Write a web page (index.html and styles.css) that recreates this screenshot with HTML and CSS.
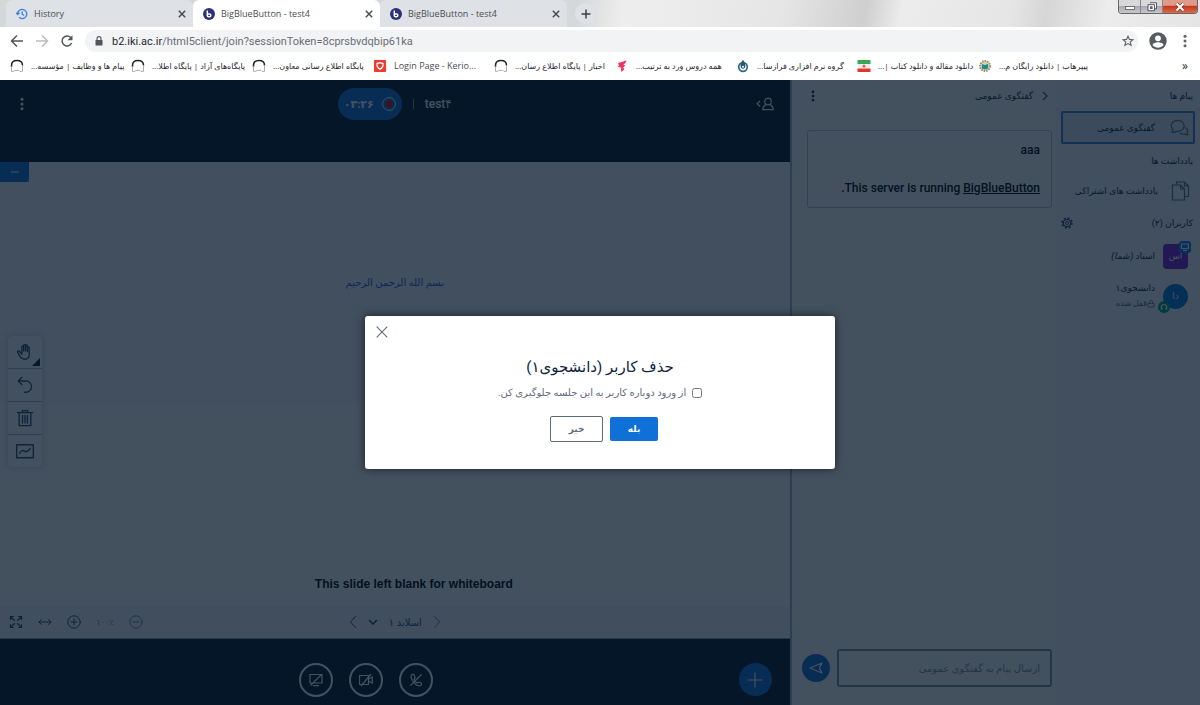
FILE: index.html
```html
<!DOCTYPE html>
<html lang="fa">
<head>
<meta charset="utf-8">
<title>BigBlueButton - test4</title>
<link rel="stylesheet" href="styles.css">
</head>
<body>
<svg class="defs" aria-hidden="true">
  <symbol id="bbb" viewBox="0 0 12 12"><circle cx="6" cy="6" r="6" fill="#283274"/><path d="M4.3 2.4v5.2c0 .8.5 1.2 1.2 1.2h1c.8 0 1.3-.5 1.3-1.3s-.5-1.4-1.3-1.4H5" fill="none" stroke="#fff" stroke-width="1.5"/></symbol>
  <symbol id="x" viewBox="0 0 10 10"><path d="M1.8 1.8l6.4 6.4M8.2 1.8L1.8 8.2" fill="none" stroke="currentColor" stroke-width="1.5"/></symbol>
  <symbol id="arch" viewBox="0 0 14 14"><path d="M1.5 8V6.500C1.500 3 4 1.600 7 1.600S12.500 3 12.500 6.500" fill="none" stroke="#222" stroke-width="1.500"/><path d="M12.500 6v6.400h-2.600l-1-1H5l-1.300 1H1.500V7" fill="none" stroke="#999" stroke-width=".8"/></symbol>
  <symbol id="dots" viewBox="0 0 4 14"><circle cx="2" cy="2.2" r="1.5"/><circle cx="2" cy="7" r="1.5"/><circle cx="2" cy="11.8" r="1.5"/></symbol>
</svg>

<header class="browser">
  <div class="tabs">
    <div class="tab">
      <svg class="fav" viewBox="0 0 12 12" fill="none" stroke="#3b82e6" stroke-width="1.3"><path d="M1.6 6A4.6 4.6 0 1 1 3 9.3M0 4.6l1.7 2 1.9-1.8M6.2 3.2v3l2 1.2"/></svg>
      <span class="tab-name">History</span><button class="tab-x" aria-label="Close tab"><svg><use href="#x"/></svg></button>
    </div>
    <div class="tab tab-on">
      <svg class="fav"><use href="#bbb"/></svg>
      <span class="tab-name">BigBlueButton - test4</span><button class="tab-x" aria-label="Close tab"><svg><use href="#x"/></svg></button>
    </div>
    <div class="tab">
      <svg class="fav"><use href="#bbb"/></svg>
      <span class="tab-name">BigBlueButton - test4</span><button class="tab-x" aria-label="Close tab"><svg><use href="#x"/></svg></button>
    </div>
    <button class="tab-new" aria-label="New tab"><svg viewBox="0 0 10 10"><path d="M5 .5v9M.5 5h9" stroke="#3c4043" stroke-width="1.5"/></svg></button>
    <div class="win">
      <button aria-label="Minimize"><svg viewBox="0 0 12 10"><rect x="1.5" y="4.5" width="9" height="3" fill="#fff" stroke="#555" stroke-width=".8"/></svg></button>
      <button aria-label="Restore"><svg viewBox="0 0 12 10"><path d="M4 .8h6.5v6H8.500M2 2.700h6.500v6H2z" fill="#fff" stroke="#445" stroke-width=".9"/><rect x="4.200" y="4.700" width="2" height="2" fill="#667" stroke="#445" stroke-width=".6"/></svg></button>
      <button class="win-x" aria-label="Close"><svg viewBox="0 0 12 10"><path d="M2.500 1.500l7 7M9.500 1.500l-7 7" stroke="#6b3a35" stroke-width="3.200"/><path d="M2.500 1.500l7 7M9.500 1.500l-7 7" stroke="#fff" stroke-width="2"/></svg></button>
    </div>
  </div>

  <div class="nav">
    <button aria-label="Back"><svg viewBox="0 0 14 14" fill="none" stroke="#50555a" stroke-width="1.500"><path d="M13 7H2M7 1.500L1.500 7 7 12.500"/></svg></button>
    <button aria-label="Forward"><svg viewBox="0 0 14 14" fill="none" stroke="#b9bcc0" stroke-width="1.500"><path d="M1 7h11M7 1.500L12.500 7 7 12.500"/></svg></button>
    <button aria-label="Reload"><svg viewBox="0 0 14 14"><path d="M11.600 9A5 5 0 1 1 10.800 3.600" fill="none" stroke="#50555a" stroke-width="1.500"/><path d="M12.500 1.300v5H7.500z" fill="#50555a"/></svg></button>
    <div class="url">
      <svg class="lock" viewBox="0 0 8 10"><rect x=".5" y="4" width="7" height="5.500" rx=".6" fill="#50555a"/><path d="M2 4V2.600a2 2 0 0 1 4 0V4" fill="none" stroke="#50555a" stroke-width="1.100"/></svg>
      <span class="addr"><b>b2.iki.ac.ir</b>/html5client/join?sessionToken=8cprsbvdqbip61ka</span>
      <svg class="star" viewBox="0 0 12 12"><path d="M6 1.200l1.400 3.200 3.500.3-2.700 2.300.9 3.400L6 8.600l-3.100 1.800.9-3.400L1.100 4.700l3.500-.3z" fill="none" stroke="#5f6368" stroke-width="1.100"/></svg>
    </div>
    <button class="profile" aria-label="Profile"><svg viewBox="0 0 18 18"><circle cx="9" cy="9" r="8.700" fill="#565b62"/><circle cx="9" cy="6.300" r="2.900" fill="#fff"/><path d="M3.600 13.200c0-2 3.600-2.900 5.400-2.900s5.400.9 5.400 2.900C13 14.800 11 15.700 9 15.700s-4-.9-5.400-2.500z" fill="#fff"/></svg></button>
    <button class="kebab" aria-label="Menu"><svg fill="#5f6368"><use href="#dots"/></svg></button>
  </div>

  <nav class="marks">
    <a href="#"><svg><use href="#arch"/></svg><span dir="rtl">پیام ها و وظایف | مؤسسه...</span></a>
    <a href="#"><svg><use href="#arch"/></svg><span dir="rtl">پایگاه‌های آزاد | پایگاه اطلا...</span></a>
    <a href="#"><svg><use href="#arch"/></svg><span dir="rtl">پایگاه اطلاع رسانی معاون...</span></a>
    <a href="#"><svg viewBox="0 0 14 14"><rect x="1" y="1" width="12" height="12" rx="1" fill="#ee3b2b"/><path d="M4 4.500l3-.8 3 .8c.3 3-1 4.700-3 5.800-2-1.100-3.300-2.800-3-5.800z" fill="none" stroke="#fff" stroke-width="1.300"/></svg><span class="lat">Login Page - Kerio...</span></a>
    <a href="#"><svg><use href="#arch"/></svg><span dir="rtl">اخبار | پایگاه اطلاع رسان...</span></a>
    <a href="#"><svg viewBox="0 0 14 14"><path d="M11.500 1.500c-2 .2-2.500 1-4 1.300L3 4l1 2.500L2.500 8l3.500.6.200 4.400 3-2.400-.9-2.400 2-1.700-1.800-1.200c1.700-.7 2.600-2 3-3.800z" fill="#f0365f"/></svg><span dir="rtl">همه دروس ورد به ترتیب...</span></a>
    <a href="#"><svg viewBox="0 0 14 14"><circle cx="7" cy="8" r="4.300" fill="none" stroke="#2b6b8c" stroke-width="1.700"/><path d="M7 .8c3.500 4.500 3 9 0 9s-3.500-4.500 0-9z" fill="#28566e"/><circle cx="7" cy="7.800" r="1" fill="#fff"/></svg><span dir="rtl">گروه نرم افزاری فرازسا...</span></a>
    <a href="#"><svg viewBox="0 0 14 14"><path fill="#3aa757" d="M.5 1h13v4H.5z"/><path fill="#eee" d="M.5 5h13v4.500H.5z"/><path fill="#e0352b" d="M.5 9.500h13v3.500H.5z"/><circle cx="7" cy="7.200" r="1.400" fill="#e0554b"/></svg><span dir="rtl">دانلود مقاله و دانلود کتاب |...</span></a>
    <a href="#"><svg viewBox="0 0 14 14"><circle cx="7" cy="7" r="5" fill="#d9d2b0" stroke="#9b8f63" stroke-width="2" stroke-dasharray="1.500 1"/><path d="M4 5l3 1 3-1v4.500l-3 1-3-1z" fill="#1d8a93"/></svg><span dir="rtl">پیپرهاب | دانلود رایگان م...</span></a>
    <button class="more" aria-label="More bookmarks">»</button>
  </nav>
</header>

<main class="app" dir="rtl">
  <aside class="people">
    <h2>پیام ها</h2>
    <a class="row row-on" href="#"><svg class="ic-lg" viewBox="0 0 20 20" fill="none" stroke="#5c7085" stroke-width="1.200"><path d="M3.800 11.500A6.500 5.500 0 1 1 7.600 13.300C6.500 14.200 4.600 14.600 3 14.300c.8-.7 1.200-1.700.8-2.800z"/><path d="M16.500 9.500a4 4 0 0 1 1.600 5.200c-.1.900.3 1.500.9 2-1.200.3-2.400 0-3.200-.7a5 5 0 0 1-5-1.200"/></svg><span>گفتگوی عمومی</span></a>
    <h2>یادداشت ها</h2>
    <a class="row row-notes" href="#"><svg class="ic-lg" viewBox="0 0 20 20" fill="none" stroke="#5c7085" stroke-width="1.200"><path d="M6.500 3.500V1h8l4 4v10.500h-3.500"/><path d="M14.500 1v4h4M2.500 4h8l4 4v11h-12zM10.500 4v4h4"/></svg><span>یادداشت های اشتراکی</span></a>
    <div class="users-head"><h2>کاربران (۲)</h2>
      <button aria-label="مدیریت کاربران"><svg viewBox="0 0 12 12" fill="none" stroke="#2f4a66"><circle cx="6" cy="6" r="3.700" stroke-width="1.300"/><circle cx="6" cy="6" r="1.500"/><circle cx="6" cy="6" r="5" stroke-width="1.600" stroke-dasharray="1.900 2.030"/></svg></button></div>
    <div class="user"><div class="ava ava-sq">اس<span class="badge badge-pres"><svg viewBox="0 0 10 10"><path d="M1.500 2h7v4.500h-7zM3 8.300h4" fill="none" stroke="#fff" stroke-width="1.200"/></svg></span></div><div class="who"><span>استاد <i>(شما)</i></span></div></div>
    <div class="user"><div class="ava">دا<span class="badge badge-aud"><svg viewBox="0 0 10 10"><path d="M2.300 7.800V5.200a2.700 2.700 0 0 1 5.400 0v2.600M3 5.800v2M7 5.800v2" fill="none" stroke="#fff" stroke-width="1.200"/></svg></span></div><div class="who"><span>دانشجوی۱</span><small><svg viewBox="0 0 8 8" fill="none" stroke="#5c7085" stroke-width=".8"><path d="M1 3.500h6V7H1zM2.500 3.500V2a1.500 1.500 0 0 1 3 0v1.500"/></svg>قفل شده</small></div></div>
  </aside>

  <section class="chat">
    <div class="chat-head"><button class="chat-back"><svg viewBox="0 0 8 10"><path d="M2 1l4 4-4 4" fill="none" stroke="#2f4a66" stroke-width="1.200"/></svg>گفتگوی عمومی</button>
      <button class="chat-dots" aria-label="گزینه‌ها"><svg fill="#10233a"><use href="#dots"/></svg></button></div>
    <div class="welcome"><p>aaa</p><p>This server is running <a href="#">BigBlueButton</a>.</p></div>
    <form class="compose"><input type="text" aria-label="پیام" placeholder="ارسال پیام به گفتگوی عمومی"><button type="button" aria-label="ارسال"><svg viewBox="0 0 14 14"><path d="M1 7l12-5-2.500 5L13 12z" fill="none" stroke="#fff" stroke-width="1.300" stroke-linejoin="round"/></svg></button></form>
  </section>

  <section class="stage">
    <div class="top">
      <button class="toggle" aria-label="کاربران"><svg viewBox="0 0 18 14" fill="none" stroke="#fff" stroke-width="1.200"><path d="M4 4L1.200 6.700 4 9.500"/><circle cx="12" cy="4.500" r="3.300"/><path d="M9.800 7.500C8 8.500 6.800 10 6.800 12.600h10.400c0-2.600-1.200-4.100-3-5.100"/></svg></button>
      <div class="meeting"><h1>test۴</h1><i class="bar"></i><button class="rec"><svg viewBox="0 0 14 14"><circle cx="7" cy="7" r="6.400" fill="none" stroke="#fff"/><circle cx="7" cy="7" r="3.500" fill="#f0000f"/></svg><span>۰۳:۲۶</span></button></div>
      <button class="opts" aria-label="گزینه‌ها"><svg fill="#fff"><use href="#dots"/></svg></button>
    </div>
    <div class="slide">
      <button class="mini" aria-label="کوچک کردن"><svg viewBox="0 0 10 10"><path d="M1 5h8" stroke="#fff"/></svg></button>
      <p class="bism">بسم الله الرحمن الرحیم</p>
      <p class="blank" dir="ltr">This slide left blank for whiteboard</p>
      <div class="tools">
        <button aria-label="حرکت"><svg viewBox="0 0 20 20"><path d="M6.500 11V4.300c0-1.500 2-1.500 2 0V9 2.700c0-1.500 2.100-1.500 2.100 0V9 3.300c0-1.400 2.100-1.400 2.100 0V9.500 5.500c0-1.400 2-1.400 2 0v7c0 3.500-1.800 5.500-5 5.500-3.500 0-4.700-2-6.200-4.500L1.700 10c-.6-1.300 1-2 1.900-1l2.900 3.500"/></svg><i class="corner"></i></button>
        <button aria-label="واگرد"><svg viewBox="0 0 20 20"><path d="M6.500 1.500L2.500 5.500l4 4M2.500 5.500H11a6.300 6.300 0 0 1 0 12.600H9.500"/></svg></button>
        <button aria-label="حذف"><svg viewBox="0 0 20 20"><path d="M1.500 4h17M7 4V1.800h6V4M3.500 4v14.500h13V4M7.300 7v8.500M10 7v8.500M12.700 7v8.500"/></svg></button>
        <button aria-label="چندکاربره"><svg viewBox="0 0 20 20"><path d="M.8 3h18.400v14.500H.8z"/><path d="M4 12.500c2-3.500 3.500-3.500 5.300-2.300s4 .3 6.700-3.200"/></svg></button>
      </div>
    </div>
    <div class="bar-slide" dir="ltr">
      <div class="zoom">
        <button aria-label="تمام صفحه"><svg viewBox="0 0 14 14" stroke-width="1.200"><path d="M1.500 4.500v-3h3M1.500 1.500l4 4M9.500 1.500h3v3M12.500 1.500l-4 4M1.500 9.500v3h3M1.500 12.500l4-4M9.500 12.500h3v-3M12.500 12.500l-4-4"/></svg></button>
        <button aria-label="تطبیق عرض"><svg viewBox="0 0 14 14"><path d="M1 7h12M3.500 4.500L1 7l2.500 2.500M10.500 4.500L13 7l-2.500 2.500"/></svg></button>
        <button aria-label="بزرگنمایی"><svg viewBox="0 0 14 14"><circle cx="7" cy="7" r="6.200"/><path d="M4 7h6M7 4v6"/></svg></button>
        <span class="pct">۱۰۰٪</span>
        <button class="dim" aria-label="کوچکنمایی"><svg viewBox="0 0 14 14"><circle cx="7" cy="7" r="6.200"/><path d="M4 7h6"/></svg></button>
      </div>
      <div class="pager">
        <button aria-label="قبلی"><svg viewBox="0 0 14 14"><path d="M9.500 1.500L4.500 7l5 5.500"/></svg></button>
        <label class="pick"><svg viewBox="0 0 10 10" stroke-width="1.600"><path d="M1.500 3.500L5 7l3.500-3.500"/></svg><select dir="rtl" aria-label="اسلاید"><option>اسلاید ۱</option></select></label>
        <button class="dim" aria-label="بعدی"><svg viewBox="0 0 14 14"><path d="M4.500 1.500L9.500 7l-5 5.500"/></svg></button>
      </div>
      <span></span>
    </div>
    <div class="bottom">
      <button class="plus" aria-label="اقدامات"><svg viewBox="0 0 16 16"><path d="M8 .5v15M.5 8h15" stroke="#fff" stroke-width="1.200"/></svg></button>
      <div class="media">
        <button aria-label="صدا"><svg viewBox="0 0 14 14"><path d="M3 1.500c-1.500 1-1 3.500.5 6 2 3.500 5 5.500 7.500 5.300 1.300-.3 2-1.500 1.300-2.500l-2-1.200c-.8-.3-1.200.9-2 .8C7 9.300 5.500 7.500 5.200 6.300 5.300 5.500 6.300 5.300 6 4.300L5 2c-.4-.8-1.300-1-2-.5zM12.500 1.500l-11 11"/></svg></button>
        <button aria-label="دوربین"><svg viewBox="0 0 14 14"><path d="M.5 2.500h9v9h-9zM9.500 6l3.800-2v6L9.500 8M12 1L2 13"/></svg></button>
        <button aria-label="اشتراک صفحه"><svg viewBox="0 0 14 14"><path d="M1 1.500h12v8.500H1zM4 12.700h6M12.500 1.500L1.500 12.500"/></svg></button>
      </div>
    </div>
  </section>

  <div class="shade">
    <div class="dialog" role="dialog" aria-labelledby="dlg-title">
      <button class="dlg-x" aria-label="بستن"><svg viewBox="0 0 12 12"><path d="M.7.700l10.600 10.600M11.300.700L.7 11.300" stroke="#5c6b7a" stroke-width="1.100"/></svg></button>
      <h2 id="dlg-title">حذف کاربر (دانشجوی۱)</h2>
      <label class="ban"><input type="checkbox">از ورود دوباره کاربر به این جلسه جلوگیری کن.</label>
      <div class="dlg-btns"><button class="yes">بله</button><button class="no">خیر</button></div>
    </div>
  </div>
</main>
</body>
</html>
```
FILE: styles.css
```css
* { box-sizing: border-box; margin: 0; padding: 0; }
html, body { height: 100%; }
body { display: flex; flex-direction: column; overflow: hidden; background: #fff; font-family: Roboto, "DejaVu Sans", sans-serif; font-size: 10px; }
button { border: 0; background: none; font: inherit; color: inherit; cursor: pointer; display: flex; align-items: center; justify-content: center; }
a { color: inherit; text-decoration: none; }
svg { display: block; flex: none; }
.defs { position: absolute; width: 0; height: 0; }

/* browser chrome */
.browser { font-family: "Open Sans", "DejaVu Sans", sans-serif; color: #4a4d52; }
.tabs { display: flex; align-items: stretch; height: 27px; padding-left: 6px; background: linear-gradient(100deg, #d6d7d9 48%, #eee 52%, #e6e6e6 65%, #cfcfcf 72%, #ececec 75%, #e6e6e6 84%, #d6d6d6 87%, #ececec 92%, #e4e4e4); }
.tab { display: flex; align-items: center; flex: 0 1 187px; padding: 0 6px 0 10px; gap: 6px; background: #dee1e6; border-radius: 6px 6px 0 0; font-size: 9px; }
.tab-on { background: #fff; }
.fav { width: 12px; height: 12px; }
.tab-name { flex: 1; white-space: nowrap; overflow: hidden; }
.tab-x svg { width: 10px; height: 10px; }
.tab-new { align-self: center; width: 21px; height: 21px; margin-left: 8px; border-radius: 50%; background: #dee1e6; }
.tab-new svg { width: 10px; height: 10px; }
.win { display: flex; align-self: flex-start; height: 14px; margin: 0 2px 0 auto; border: 1px solid #666; border-top: 0; border-radius: 0 0 4px 4px; overflow: hidden; }
.win button { width: 22px; background: linear-gradient(#d8d8da 45%, #a8a8ae 50%, #c8c8cc); border-right: 1px solid #888; }
.win .win-x { width: 34px; border: 0; background: linear-gradient(#e09a8c 40%, #c43a20 50%, #dd6a48); }
.win svg { width: 12px; height: 10px; }
.nav { display: flex; align-items: center; height: 28px; padding: 0 8px 0 10px; gap: 11px; }
.nav > button svg { width: 14px; height: 14px; }
.url { flex: 1; display: flex; align-items: center; gap: 9px; height: 22px; padding: 0 4px 0 10px; border-radius: 11px; background: #f1f3f4; }
.lock { width: 8px; height: 10px; }
.addr { flex: 1; font-family: Roboto, sans-serif; font-size: 11px; color: #6b6f74; }
.addr b { font-weight: 400; color: #26282b; }
.star { width: 12px; height: 12px; }
.nav .profile svg { width: 18px; height: 18px; }
.nav .kebab svg { width: 4px; height: 14px; }
.nav .kebab { width: 14px; }
.marks { display: flex; align-items: center; height: 25px; padding: 0 12px 4px 10px; font-size: 8px; color: #26282b; }
.marks a { flex: 0 1 121px; display: flex; align-items: center; gap: 7px; min-width: 0; white-space: nowrap; }
.marks svg { width: 14px; height: 14px; }
.marks .lat { font-size: 9px; color: #4a4d52; }
.more { margin-left: auto; font-size: 12px; }

/* meeting */
.app { position: relative; flex: 1; min-height: 0; display: grid; grid-template-columns: 12% 22.2% 1fr; color: #4a5f75; }
.people { padding: 9px 5px; display: flex; flex-direction: column; background: #f3f6f9; }
.people h2 { font-size: 9px; line-height: 14px; font-weight: 400; color: #10233a; padding-right: 2px; }
.row { display: flex; align-items: center; gap: 14px; height: 33px; margin: 8px 0 10px; padding: 0 4px; border: 2px solid transparent; border-radius: 2px; font-size: 9px; white-space: nowrap; color: #10233a; }
.row-on { border-color: #3a80d8; background: #dfe6ed; }
.row-notes { gap: 12px; margin: 6px 0 9px; padding: 0 3px; }
.ic-lg { width: 20px; height: 20px; }
.users-head { display: flex; justify-content: space-between; align-items: center; margin-bottom: 6px; }
.users-head svg { width: 12px; height: 12px; }
.user { display: flex; align-items: center; gap: 8px; height: 40px; padding-right: 7px; }
.ava { position: relative; display: flex; align-items: center; justify-content: center; width: 25px; height: 25px; border-radius: 50%; background: #0277dd; color: #fff; font-size: 9px; }
.ava-sq { border-radius: 4px; background: #7a1fd0; }
.badge { position: absolute; width: 12px; height: 12px; padding: 1px; border-radius: 50%; }
.badge svg { width: 10px; height: 10px; }
.badge-pres { top: -3px; right: -3px; border-radius: 3px; background: #0f80f7; }
.badge-aud { bottom: -4px; left: -5px; background: #00a080; }
.ava-sq .badge-pres { left: auto; }
.who { display: flex; flex-direction: column; font-size: 9px; line-height: 15px; color: #10233a; }
.who small { display: flex; align-items: center; font-size: 8px; color: #4a5f75; }
.who small svg { width: 8px; height: 8px; }

.chat { display: flex; flex-direction: column; padding: 8px 4px 18px 10px; border-left: 2px solid #a8b4c0; background: #fbfdfd; }
.chat-head { display: flex; justify-content: space-between; align-items: center; height: 16px; padding: 0 3px 0 9px; }
.chat-back { gap: 8px; font-size: 9px; color: #10233a; }
.chat-back svg { width: 8px; height: 10px; }
.chat-dots svg { width: 4px; height: 12px; }
.welcome { margin: 26px 0 0 5px; padding: 9px 11px; border: 1px solid #b9c4cf; border-radius: 3px; color: #000; font-size: 12px; font-weight: 500; line-height: 20px; }
.welcome p + p { margin-top: 18px; }
.welcome a { text-decoration: underline; }
.compose { display: flex; align-items: center; gap: 7px; margin-top: auto; }
.compose input { flex: 1; min-width: 0; height: 38px; padding: 0 10px; border: 2px solid #7d90a6; border-radius: 3px; background: transparent; font: 10px Roboto, "DejaVu Sans", sans-serif; }
.compose input::placeholder { color: #7f8d9c; }
.compose button { width: 28px; height: 28px; border-radius: 50%; background: #0f70d7; }
.compose svg { width: 14px; height: 14px; }

.stage { display: flex; flex-direction: column; min-width: 0; background: #06172a; }
.top { display: grid; grid-template-columns: 1fr auto 1fr; align-items: start; height: 82px; padding: 8px 16px; color: #fff; }
.top > button, .meeting { height: 32px; }
.toggle { justify-self: start; }
.toggle svg { width: 18px; height: 14px; }
.opts { justify-self: end; width: 12px; }
.opts svg { width: 4px; height: 14px; }
.meeting { display: flex; align-items: center; gap: 11px; }
.meeting h1 { font-size: 12px; font-weight: 500; }
.bar { width: 1px; height: 10px; background: #7f8d9c; }
.rec { gap: 8px; height: 32px; padding: 0 6px; border-radius: 16px; background: #0f70d7; font-size: 11px; font-weight: 700; }
.rec svg { width: 14px; height: 14px; }
.slide { position: relative; flex: 1; display: flex; flex-direction: column; justify-content: space-between; align-items: center; padding: 111px 0 13px; background: linear-gradient(#f5f5fd 55%, #fafdfc 55%); color: #000; }
.bism { color: #0f5fd7; font-size: 10px; line-height: 20px; }
.blank { padding-left: 38px; font: 700 12px/18px "Liberation Sans", sans-serif; }
.mini { position: absolute; top: 0; left: 0; width: 29px; height: 20px; background: #0f70d7; border-radius: 0 0 2px 0; }
.mini svg { width: 10px; height: 10px; }
.tools { position: absolute; left: 8px; bottom: 139px; display: grid; gap: 1px; border-radius: 3px; background: #a8b4c0; box-shadow: 0 0 6px #c0cad4; overflow: hidden; }
.tools button { position: relative; width: 34px; height: 32px; background: #fafcfd; }
.tools svg { width: 18px; height: 18px; fill: none; stroke: #2f4a66; stroke-width: 1.500; stroke-linecap: round; stroke-linejoin: round; }
.corner { position: absolute; right: 2px; bottom: 2px; border: 4px solid #10233a; border-top-color: transparent; border-left-color: transparent; }
.bar-slide { display: grid; grid-template-columns: 1fr auto 1fr; align-items: center; height: 33px; padding: 0 9px; background: #f0f3f5; border-bottom: 1px solid #8797a8; }
.bar-slide svg { width: 14px; height: 14px; fill: none; stroke: #2f4a66; stroke-linecap: round; }
.zoom, .pager { display: flex; align-items: center; }
.zoom { gap: 15px; }
.pct { width: 18px; font-size: 8px; color: #5c7085; text-align: center; }
.bar-slide .dim svg { stroke: #6f8194; }
.pager { gap: 8px; }
.pick { display: flex; align-items: center; gap: 10px; }
.bar-slide .pick svg { width: 10px; height: 10px; }
.pick select { appearance: none; border: 0; background: none; font: 10px Roboto, "DejaVu Sans", sans-serif; color: #2f4a66; }
.bottom { display: flex; align-items: flex-start; gap: 6px; height: 66px; padding: 24px 18px 0 0; }
.plus { width: 33px; height: 33px; border-radius: 50%; background: #0f70d7; }
.plus svg { width: 16px; height: 16px; }
.media { flex: 1; display: flex; justify-content: center; gap: 16px; }
.media button { width: 34px; height: 34px; border: 2px solid #fff; border-radius: 50%; }
.media svg { width: 14px; height: 14px; fill: none; stroke: #fff; stroke-width: 1.200; }

/* dialog */
.shade { position: absolute; inset: 0; display: flex; align-items: center; justify-content: center; background: rgba(6, 23, 42, .75); }
.dialog { position: relative; width: 470px; max-width: 90%; padding: 38px 20px 27px; display: flex; flex-direction: column; align-items: center; border-radius: 3px; background: #fff; box-shadow: 0 0 10px rgba(0, 0, 0, .6); color: #5c6b7a; }
.dlg-x { position: absolute; top: 10px; left: 11px; }
.dlg-x svg { width: 12px; height: 12px; }
.dialog h2 { font-size: 15px; line-height: 26px; font-weight: 400; color: #10233a; }
.ban { display: flex; align-items: center; gap: 6px; margin-top: 4px; font-size: 10px; line-height: 18px; }
.ban input { width: 10px; height: 10px; }
.dlg-btns { display: flex; align-items: center; gap: 7px; margin: 14px 0 0 8px; font-size: 9px; font-weight: 700; }
.yes { width: 48px; height: 24px; border-radius: 2px; background: #0f70d7; color: #fff; }
.no { width: 53px; height: 26px; border: 1px solid #5c6b7a; border-radius: 2px; }
```
